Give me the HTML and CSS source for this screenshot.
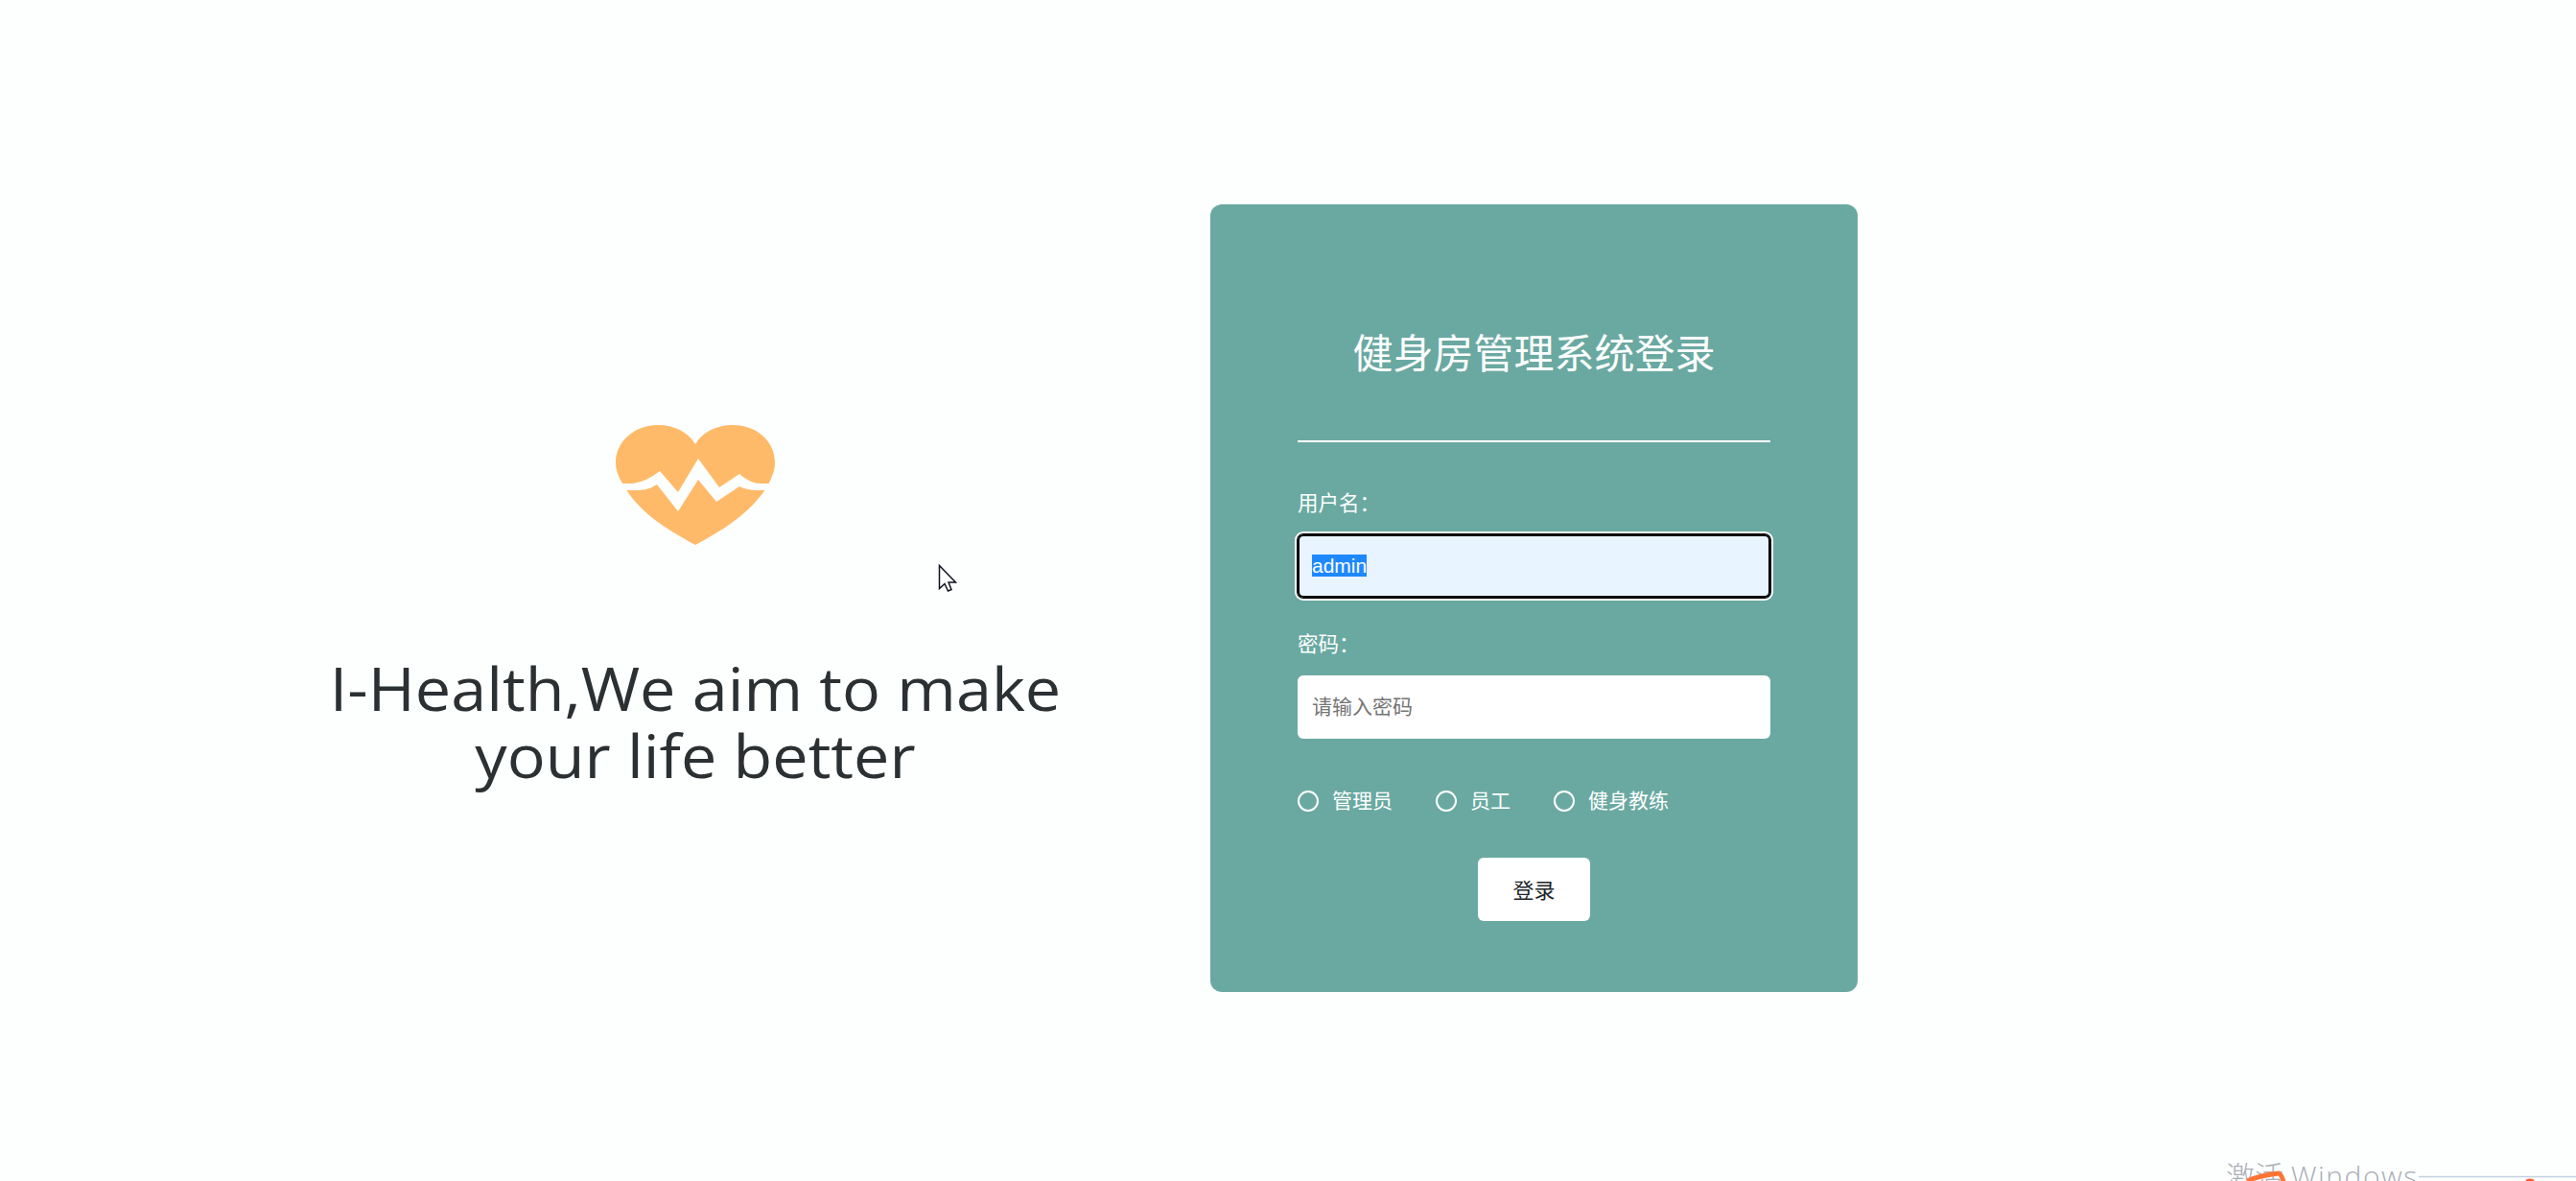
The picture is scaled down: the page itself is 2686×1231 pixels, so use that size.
FILE: index.html
```html
<!DOCTYPE html>
<html lang="zh-CN">
    <head>
        <meta charset="UTF-8" />
        <meta name="viewport" content="width=device-width, initial-scale=1.0" />
        <title>健身房管理系统登录</title>
        <link rel="stylesheet" href="styles.css">
    </head>
    <body>
        <div class="container">
            <div class="intro">
                <svg class="logo" viewBox="0 0 166 125">
                    <path d="M83 125C50 107 24 90 9 64C2 53 0 46 0 39C0 17 20 0 44 0C62 0 76 8 83 20C90 8 104 0 122 0C147 0 166 17 166 39C166 46 164 53 158 64C142 90 116 107 83 125Z" fill="#ffba69" />
                    <path d="M0 61H18Q32 59 46 48L65 70L86 35L108 65L129 51Q140 61 152 61H166V68H145Q137 68 129 64L105 80L86 57L65 90L43 62Q34 68 25 68H0Z" fill="#fdfffe" />
                </svg>
                <h1 class="slogan">I-Health,We aim to make your life better</h1>
            </div>
            <form class="login-box">
                <h2 class="title">健身房管理系统登录</h2>
                <label class="label" for="username">用户名&#xFF1A;</label>
                <div class="input focused" id="username"><span class="selected">admin</span></div>
                <label class="label" for="password">密码&#xFF1A;</label>
                <input class="input" type="password" id="password" placeholder="请输入密码" />
                <div class="roles">
                    <label class="role"><input type="radio" name="role" />管理员</label>
                    <label class="role"><input type="radio" name="role" />员工</label>
                    <label class="role"><input type="radio" name="role" />健身教练</label>
                </div>
                <button class="submit" type="button">登录</button>
            </form>
        </div>

        <svg class="cursor" viewBox="0 0 20 30">
            <path d="M1.5 1.5V25.5L7 20.5L10.5 28L14 26.5L11 19H18.5Z" fill="#fff" stroke="#111122" stroke-width="1.5" />
        </svg>

        <!-- Desktop watermark, cut off by the bottom edge -->
        <div class="watermark">激活 <span class="watermark-name">Windows</span></div>
        <svg class="corner" viewBox="0 0 345 14">
            <path d="M181 9.5H345" stroke="#c3d0e0" stroke-width="1.5" />
            <path d="M2 14Q16 8 35 6Q38 7 40 15" fill="none" stroke="#ff7434" stroke-width="5" />
            <ellipse cx="297" cy="14" rx="4.5" ry="2.5" fill="#ff5a30" />
        </svg>
    </body>
</html>
```
FILE: styles.css
```css
body {
    font-family: "Liberation Sans", "Noto Sans CJK SC", sans-serif;
    margin: 0;
    padding: 0;
    height: 1231px;
    overflow: hidden;
    background-color: #fdfffe;
}
.container {
    display: flex;
    align-items: flex-start;
    padding: 213px 0 0 325px;
}
.intro {
    width: 800px;
    margin-right: 137px;
    padding-top: 230px;
    text-align: center;
}
.logo {
    display: block;
    width: 166px;
    height: 125px;
    margin: 0 auto;
}
.slogan {
    margin: 114px 0 0;
    font-family: "Open Sans", sans-serif;
    font-size: 62px;
    font-weight: 400;
    line-height: 70px;
    color: #2b3033;
    transform: scaleX(1.073);
}
.login-box {
    box-sizing: border-box;
    display: flex;
    flex-direction: column;
    width: 675px;
    height: 821px;
    padding: 106px 91px 0;
    border-radius: 12px;
    background-color: #6aa9a1;
    color: #fff;
}
.title {
    box-sizing: border-box;
    height: 142px;
    margin: 0 0 46px;
    border-bottom: 2px solid #fff;
    font-size: 42px;
    font-weight: 400;
    line-height: 102px;
    text-align: center;
}
.label {
    height: 34px;
    margin-bottom: 16px;
    font-size: 21.5px;
    line-height: 36px;
}
.input {
    box-sizing: border-box;
    width: 493px;
    height: 66px;
    margin: 0 0 31px;
    padding: 0 15px;
    border: none;
    border-radius: 6px;
    background-color: #fff;
    font-family: inherit;
    font-size: 21px;
    line-height: 66px;
}
.input::placeholder {
    color: #757575;
}
.focused {
    background-color: #e8f4ff;
    box-shadow: 0 0 0 1px #000, 0 0 0 3px #fff, inset 0 0 0 2px #000;
}
.selected {
    background-color: #1e88ff;
}
.roles {
    display: flex;
    gap: 45px;
    height: 32px;
    margin-top: 18px;
}
.role {
    display: flex;
    align-items: center;
    font-size: 21px;
    line-height: 32px;
}
.role input {
    appearance: none;
    box-sizing: border-box;
    width: 22px;
    height: 22px;
    margin: 0 14px 0 0;
    border: 2px solid #fff;
    border-radius: 50%;
}
.submit {
    align-self: center;
    width: 117px;
    height: 66px;
    margin-top: 43px;
    padding: 0 0 3px;
    border: none;
    border-radius: 6px;
    background-color: #fff;
    color: #212529;
    font-family: inherit;
    font-size: 22px;
}
.cursor {
    position: absolute;
    left: 978px;
    top: 588px;
    width: 20px;
    height: 30px;
}
.watermark {
    position: absolute;
    left: 2321px;
    top: 1205px;
    font-family: "Open Sans", "Noto Sans CJK SC", sans-serif;
    font-size: 30px;
    font-weight: 300;
    line-height: 42px;
    color: #a9aeb6;
}
.watermark-name {
    letter-spacing: 1.5px;
}
.corner {
    position: absolute;
    left: 2341px;
    top: 1217px;
    width: 345px;
    height: 14px;
}
```
